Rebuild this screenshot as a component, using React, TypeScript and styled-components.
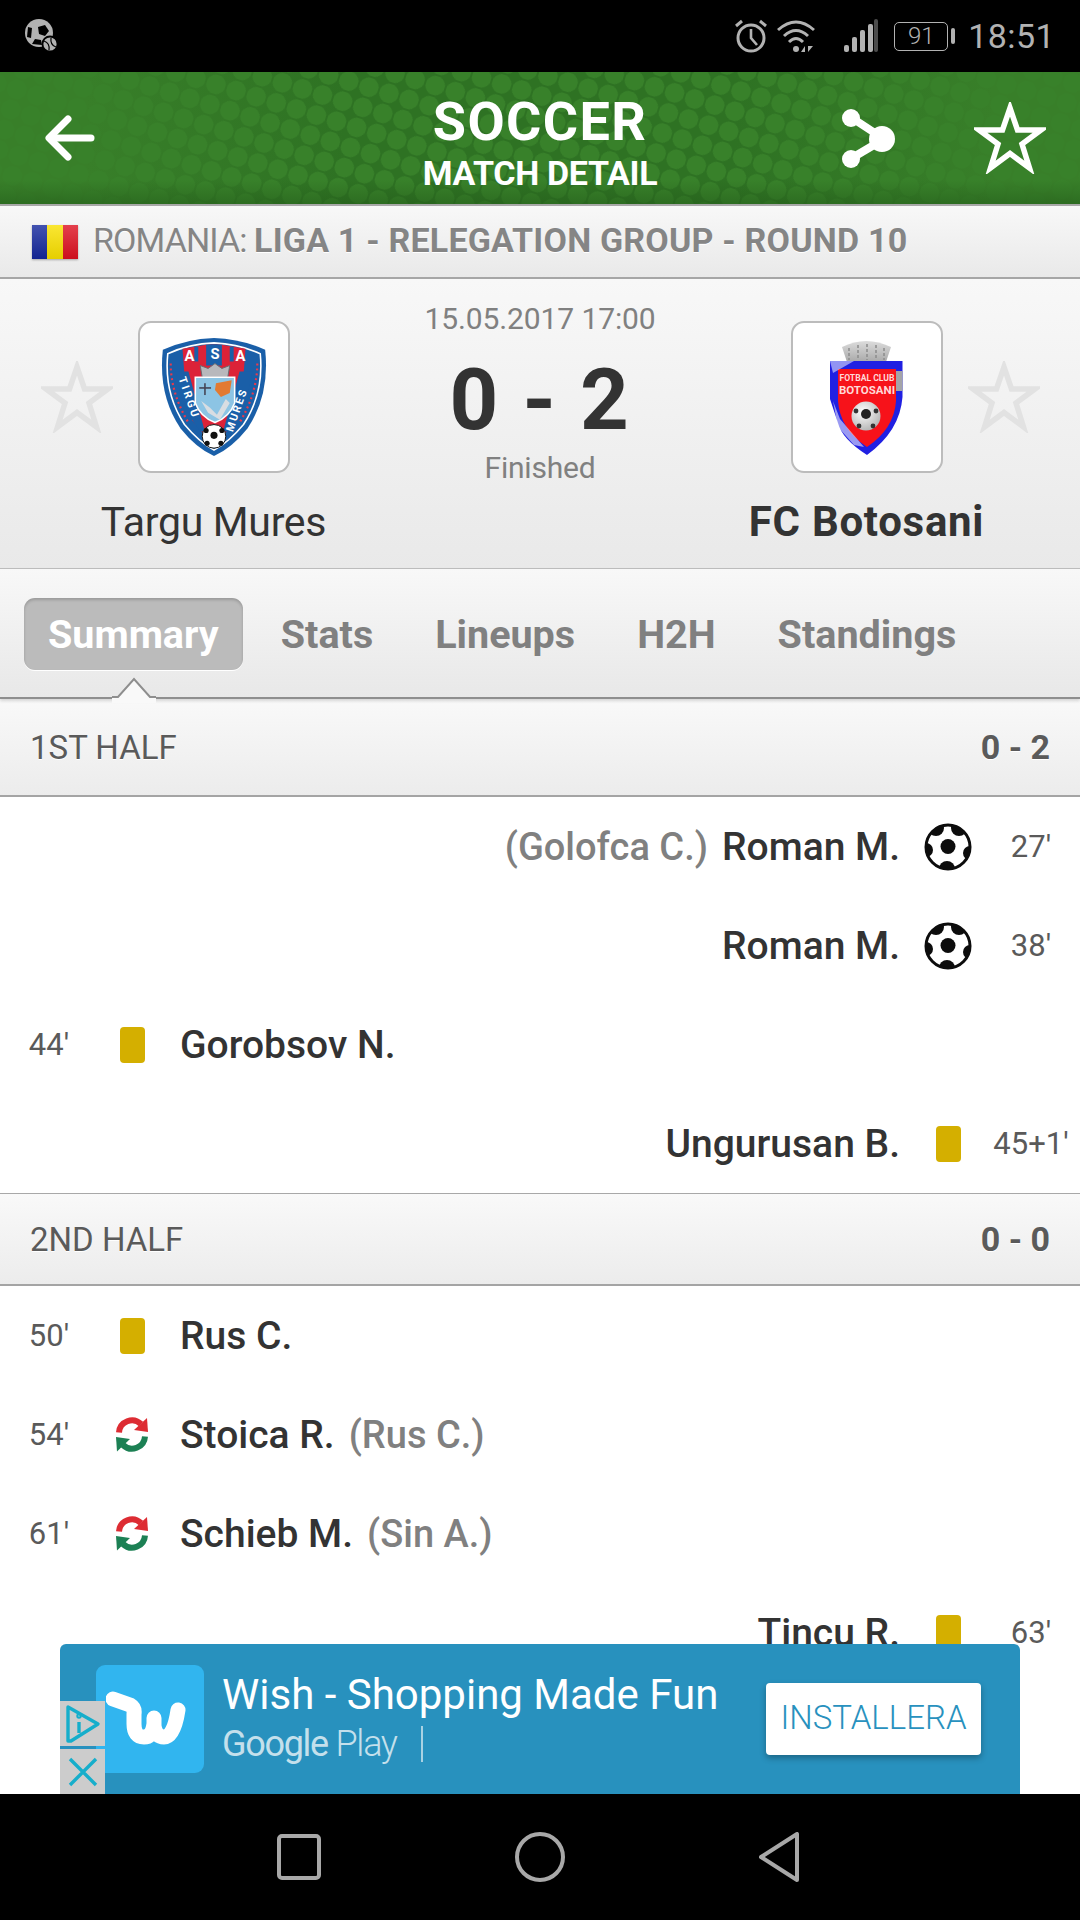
import styled, { createGlobalStyle } from 'styled-components';

const GlobalStyle = createGlobalStyle`
  html, body {
    margin: 0;
    padding: 0;
    background: #fff;
  }

  * {
    box-sizing: border-box;
  }
`;

const FONT = `Roboto, "Liberation Sans", sans-serif`;

type Side = 'left' | 'right';
type Mark = 'ball' | 'card' | 'sub';

type MatchEvent = {
  side: Side;
  minute: string;
  mark: Mark;
  name: string;
  assist?: string;
};

const FIRST_HALF: MatchEvent[] = [
  { side: 'right', minute: "27'", mark: 'ball', name: 'Roman M.', assist: '(Golofca C.)' },
  { side: 'right', minute: "38'", mark: 'ball', name: 'Roman M.' },
  { side: 'left', minute: "44'", mark: 'card', name: 'Gorobsov N.' },
  { side: 'right', minute: "45+1'", mark: 'card', name: 'Ungurusan B.' },
];

const SECOND_HALF: MatchEvent[] = [
  { side: 'left', minute: "50'", mark: 'card', name: 'Rus C.' },
  { side: 'left', minute: "54'", mark: 'sub', name: 'Stoica R.', assist: '(Rus C.)' },
  { side: 'left', minute: "61'", mark: 'sub', name: 'Schieb M.', assist: '(Sin A.)' },
  { side: 'right', minute: "63'", mark: 'card', name: 'Tincu R.' },
];

const TABS = ['Summary', 'Stats', 'Lineups', 'H2H', 'Standings'];

const StarIcon = ({ size, color }: { size: number; color: string }) => (
  <svg width={size} height={size} viewBox="0 0 72 70" fill="none">
    <path
      d="M36 5 L43.5 27 L67 27 L48 41 L55.5 65 L36 50.5 L16.5 65 L24 41 L5 27 L28.5 27 Z"
      stroke={color}
      strokeWidth="5.5"
      strokeLinejoin="miter"
    />
  </svg>
);

const BallIcon = () => (
  <svg width="48" height="48" viewBox="0 0 48 48">
    <defs>
      <clipPath id="ballClip">
        <circle cx="24" cy="24" r="22" />
      </clipPath>
    </defs>
    <circle cx="24" cy="24" r="22" fill="#fff" />
    <g clipPath="url(#ballClip)" fill="#0c0c0c">
      <circle cx="12" cy="5" r="8" />
      <circle cx="35" cy="5" r="8" />
      <circle cx="2" cy="27" r="7" />
      <circle cx="46" cy="30" r="7" />
      <circle cx="23" cy="46" r="8" />
    </g>
    <circle cx="24" cy="24" r="22" fill="none" stroke="#0c0c0c" strokeWidth="3" />
    <circle cx="24" cy="23.5" r="7.5" fill="#0c0c0c" />
  </svg>
);

const SubIcon = () => (
  <svg width="36" height="36" viewBox="0 0 36 36" fill="none">
    <path d="M5 15.5 A13 13 0 0 1 27 7" stroke="#dd2c33" strokeWidth="6" />
    <path d="M33 1 L34 15 L20 13 Z" fill="#dd2c33" />
    <path d="M31 19.5 A13 13 0 0 1 9 28" stroke="#1c8054" strokeWidth="6" />
    <path d="M3 34.5 L2 20 L16 22 Z" fill="#1c8054" />
  </svg>
);

const AsaCrest = () => (
  <svg width="112" height="122" viewBox="0 0 112 124">
    <path d="M56 2 Q84 3 108 14 Q113 60 90 94 Q74 114 56 122 Q38 114 22 94 Q-1 60 4 14 Q28 3 56 2 Z" fill="#1a5fa8" />
    <path d="M56 7 Q81 8 103 18 Q107 58 86 90 Q71 108 56 116 Q41 108 26 90 Q5 58 9 18 Q31 8 56 7 Z" fill="none" stroke="#fff" strokeWidth="1.6" />
    <path d="M24 13 L48 9 H64 L88 13 L86 40 L78 86 L56 112 L34 86 L26 40 Z" fill="#dc2238" />
    <path d="M48 9 H64 V30 H48 Z" fill="#1a5fa8" />
    <path d="M36 11 H40 V26 H36 Z M72 11 H76 V26 H72 Z" fill="#1a5fa8" />
    <path d="M12 28 Q12 58 30 88" stroke="#e83a4c" strokeWidth="2.2" fill="none" strokeDasharray="2 3" />
    <path d="M100 28 Q100 58 82 88" stroke="#e83a4c" strokeWidth="2.2" fill="none" strokeDasharray="2 3" />
    <path d="M17 36 L30 36 L47 98 L41 96 Q22 70 17 36 Z" fill="#1a5fa8" />
    <path d="M95 36 L82 36 L65 98 L71 96 Q90 70 95 36 Z" fill="#1a5fa8" />
    <text x="31" y="25" fontFamily={FONT} fontSize="15" fontWeight="700" fill="#fff" textAnchor="middle">A</text>
    <text x="57" y="23" fontFamily={FONT} fontSize="15" fontWeight="700" fill="#fff" textAnchor="middle">S</text>
    <text x="83" y="25" fontFamily={FONT} fontSize="15" fontWeight="700" fill="#fff" textAnchor="middle">A</text>
    <text transform="translate(20 43) rotate(71)" fontFamily={FONT} fontSize="11" fontWeight="700" fill="#fff" letterSpacing="2.6">TIRGU</text>
    <text transform="translate(75 98) rotate(-71)" fontFamily={FONT} fontSize="11" fontWeight="700" fill="#fff" letterSpacing="1.8">MURES</text>
    <path d="M44 42 L42 30 L50 33 L57 28 L64 33 L72 30 L70 42 Z" fill="#b8b8bc" stroke="#6a6a70" strokeWidth="1" />
    <path d="M37 42 H77 V68 Q72 82 57 88 Q42 82 37 68 Z" fill="#8cc4e4" stroke="#fff" strokeWidth="1.6" />
    <path d="M58 48 L74 45 L72 58 L63 62 L57 55 Z" fill="#e27a32" />
    <path d="M43 66 L52 73 L59 80 L68 64 L72 68 L62 85 L50 78 Z" fill="#d8dde2" />
    <rect x="41" y="52" width="12" height="1.6" fill="#445" />
    <rect x="46" y="48" width="1.6" height="12" fill="#445" />
    <circle cx="56" cy="102" r="12" fill="#fff" stroke="#111" strokeWidth="1" />
    <circle cx="56" cy="101" r="3.6" fill="#111" />
    <circle cx="48" cy="96" r="2.6" fill="#111" />
    <circle cx="64" cy="96" r="2.6" fill="#111" />
    <circle cx="49" cy="109" r="2.6" fill="#111" />
    <circle cx="63" cy="109" r="2.6" fill="#111" />
  </svg>
);

const BotosaniCrest = () => (
  <svg width="73" height="117" viewBox="0 0 73 117">
    <defs>
      <linearGradient id="crownGrey" x1="0" y1="0" x2="0" y2="1">
        <stop offset="0" stopColor="#dcdcdc" />
        <stop offset="1" stopColor="#a9a9a9" />
      </linearGradient>
      <radialGradient id="ballShade" cx="0.4" cy="0.35" r="0.8">
        <stop offset="0" stopColor="#ffffff" />
        <stop offset="1" stopColor="#a8a8a8" />
      </radialGradient>
    </defs>
    <path d="M17 23 L12 8 Q36 -4 61 8 L56 23 Z" fill="url(#crownGrey)" />
    <path d="M19 9 V21 M28 6 V21 M37 5 V21 M46 6 V21 M54 9 V21" stroke="#8f8f8f" strokeWidth="1.6" strokeDasharray="3 2" />
    <path d="M0 22 H72.5 V58 Q70 92 37 116 Q12 100 8 84 L0 60 Z" fill="#2020e2" />
    <path d="M66 32 H72.5 V52 H66 Z" fill="#a4a4a8" />
    <path d="M8 30 H66 V62 Q64 90 37 108 Q10 90 8 62 Z" fill="#f7121a" />
    <path d="M0 22 H24 L3 34 Z" fill="#dfe2ff" opacity="0.6" />
    <path d="M3 62 L10 80 L34 108 L24 106 L8 88 Z" fill="#fff" opacity="0.55" />
    <text x="37" y="42" fontFamily={FONT} fontSize="8.6" fontWeight="700" fill="#ffd8d8" textAnchor="middle">FOTBAL CLUB</text>
    <text x="37" y="55" fontFamily={FONT} fontSize="11.5" fontWeight="700" fill="#ffd8d8" textAnchor="middle">BOTOSANI</text>
    <circle cx="36" cy="77" r="14.5" fill="url(#ballShade)" />
    <circle cx="36" cy="75" r="5" fill="#222" />
    <circle cx="26" cy="72" r="2.4" fill="#333" />
    <circle cx="46" cy="72" r="2.4" fill="#333" />
    <circle cx="29" cy="87" r="2.4" fill="#333" />
    <circle cx="43" cy="87" r="2.4" fill="#333" />
  </svg>
);

const WishGlyph = () => (
  <svg width="82" height="58" viewBox="0 0 82 58" fill="none">
    <path
      d="M7 9 L24 15 Q29 18 28 24 V34 Q28 47 38 47 Q46 47 48 34 V28 V36 Q50 47 58 47 Q68 47 72 20"
      stroke="#fff"
      strokeWidth="15"
      strokeLinecap="round"
      strokeLinejoin="round"
    />
  </svg>
);

const EventMark = ({ mark }: { mark: Mark }) => {
  if (mark === 'ball') return <BallIcon />;
  if (mark === 'sub') return <SubIcon />;
  return <YellowCard />;
};

const EventRow = ({ event }: { event: MatchEvent }) => (
  <Row $side={event.side}>
    <Minute>{event.minute}</Minute>
    <MarkCell>
      <EventMark mark={event.mark} />
    </MarkCell>
    <PlayerName>{event.name}</PlayerName>
    {event.assist && <Assist>{event.assist}</Assist>}
  </Row>
);

const App = () => {
  return (
    <Page>
      <GlobalStyle />
      <StatusBar>
        <svg width="34" height="34" viewBox="0 0 34 34">
          <circle cx="15" cy="14" r="14" fill="#b2b2b2" />
          <path d="M14 8 L21 6 L25 12 L21 17 L15 15 Z" fill="#000" />
          <path d="M4 8 L8 9 L7 19 L3 18 Z" fill="#000" />
          <path d="M8 25 L11 20 L17 21 L18 26 Z" fill="#000" />
          <circle cx="26" cy="25" r="8.5" fill="#000" />
          <circle cx="26" cy="25" r="6.6" fill="#b2b2b2" />
          <path d="M20 22 Q26 24 25 31 M32 28 Q26 26 27 19" stroke="#000" strokeWidth="1.2" fill="none" />
        </svg>
        <StatusRight>
          <svg width="32" height="34" viewBox="0 0 32 34" fill="none" stroke="#b2b2b2">
            <circle cx="16" cy="19" r="13" strokeWidth="3" />
            <path d="M16 10 V19 L22 26" strokeWidth="2.6" />
            <path d="M1 7 L7 2 M31 7 L25 2" strokeWidth="3" />
          </svg>
          <WifiIcon width="38" height="34" viewBox="0 0 38 34" fill="none" stroke="#b2b2b2">
            <path d="M1 11 Q19 -5 37 11" strokeWidth="3" />
            <path d="M7 17 Q19 6 31 17" strokeWidth="3" />
            <path d="M12 23 Q19 16 26 23" strokeWidth="3" />
            <circle cx="19" cy="30" r="3" fill="#b2b2b2" stroke="none" />
            <path d="M28 33 V27 L24 33 Z M31 27 V33 L36 27 Z" fill="#b2b2b2" stroke="none" />
          </WifiIcon>
          <SignalIcon width="35" height="34" viewBox="0 0 35 34">
            <rect x="0" y="26" width="5" height="7" rx="2" fill="#b2b2b2" />
            <rect x="8" y="18" width="5" height="15" rx="2" fill="#b2b2b2" />
            <rect x="16" y="11" width="5" height="22" rx="2" fill="#b2b2b2" />
            <rect x="24" y="5" width="5" height="28" rx="2" fill="#b2b2b2" />
            <rect x="30" y="0" width="4" height="33" rx="2" fill="#4c4c4c" />
          </SignalIcon>
          <Battery>
            <BatteryBody>91</BatteryBody>
            <BatteryNub />
          </Battery>
          <Clock>18:51</Clock>
        </StatusRight>
      </StatusBar>

      <Header>
        <HeaderSide>
          <svg width="52" height="48" viewBox="0 0 52 48" fill="none" stroke="#fff" strokeWidth="7" strokeLinecap="round" strokeLinejoin="round">
            <path d="M24 5 L5 24 L24 43" />
            <path d="M7 24 H47" />
          </svg>
        </HeaderSide>
        <HeaderTitle>
          <Sport>SOCCER</Sport>
          <Screen>MATCH DETAIL</Screen>
        </HeaderTitle>
        <HeaderActions>
          <svg width="54" height="60" viewBox="0 0 54 60">
            <path d="M10 10 L42 31 L10 50" stroke="#fff" strokeWidth="8" fill="none" />
            <circle cx="9" cy="10" r="9" fill="#fff" />
            <circle cx="40" cy="31" r="13" fill="#fff" />
            <circle cx="9" cy="51" r="9" fill="#fff" />
          </svg>
          <StarIcon size={72} color="#fff" />
        </HeaderActions>
      </Header>

      <LeagueBar>
        <Flag />
        <LeagueText>
          ROMANIA: <b>LIGA 1 - RELEGATION GROUP - ROUND 10</b>
        </LeagueText>
      </LeagueBar>

      <MatchBlock>
        <Team>
          <LogoRow>
            <FavouriteStar $side="left">
              <StarIcon size={72} color="#e2e2e2" />
            </FavouriteStar>
            <LogoBox>
              <AsaCrest />
            </LogoBox>
          </LogoRow>
          <TeamName>Targu Mures</TeamName>
        </Team>
        <ScoreColumn>
          <MatchDate>15.05.2017 17:00</MatchDate>
          <Score>0 - 2</Score>
          <MatchState>Finished</MatchState>
        </ScoreColumn>
        <Team>
          <LogoRow>
            <LogoBox>
              <BotosaniCrest />
            </LogoBox>
            <FavouriteStar $side="right">
              <StarIcon size={72} color="#e2e2e2" />
            </FavouriteStar>
          </LogoRow>
          <TeamName $winner>FC Botosani</TeamName>
        </Team>
      </MatchBlock>

      <TabBar>
        {TABS.map((tab, idx) => (
          <Tab key={tab} $active={idx === 0}>
            {tab}
          </Tab>
        ))}
        <TabNotch width="44" height="26" viewBox="0 0 44 26">
          <path d="M0 20 L6 20 L22 2 L38 20 L44 20 V26 H0 Z" fill="#f9f9f9" />
          <path d="M0 20 H6 L22 2 L38 20 H44" fill="none" stroke="#8e8e8e" strokeWidth="2" />
        </TabNotch>
      </TabBar>

      <Content>
        <HalfHeader $height={98}>
          <HalfName>1ST HALF</HalfName>
          <HalfScore>0 - 2</HalfScore>
        </HalfHeader>
        {FIRST_HALF.map((event, idx) => (
          <EventRow key={idx} event={event} />
        ))}
        <HalfHeader $height={93} $ruled>
          <HalfName>2ND HALF</HalfName>
          <HalfScore>0 - 0</HalfScore>
        </HalfHeader>
        {SECOND_HALF.map((event, idx) => (
          <EventRow key={idx} event={event} />
        ))}

        <AdBanner>
          <AdIcon>
            <WishGlyph />
          </AdIcon>
          <AdCopy>
            <AdTitle>Wish - Shopping Made Fun</AdTitle>
            <AdStore>
              <span>
                Google <em>Play</em>
              </span>
              <AdDivider />
            </AdStore>
          </AdCopy>
          <InstallButton>INSTALLERA</InstallButton>
          <AdBadges>
            <AdBadge>
              <svg width="36" height="38" viewBox="0 0 36 38" fill="none" stroke="#16aecb" strokeWidth="3.4" strokeLinejoin="round">
                <path d="M3 2 L33 19 L6 36 H3 Z" />
                <path d="M14 17 V28" />
                <circle cx="14" cy="11" r="1" />
              </svg>
            </AdBadge>
            <AdBadge>
              <svg width="30" height="30" viewBox="0 0 30 30" stroke="#16aecb" strokeWidth="3.4">
                <path d="M2 2 L28 28 M28 2 L2 28" />
              </svg>
            </AdBadge>
          </AdBadges>
        </AdBanner>
      </Content>

      <NavBar>
        <svg width="44" height="46" viewBox="0 0 44 46" fill="none" stroke="#a8a8a8" strokeWidth="4">
          <rect x="2" y="2" width="40" height="42" rx="3" />
        </svg>
        <svg width="50" height="50" viewBox="0 0 50 50" fill="none" stroke="#a8a8a8" strokeWidth="4">
          <circle cx="25" cy="25" r="23" />
        </svg>
        <svg width="40" height="50" viewBox="0 0 40 50" fill="none" stroke="#a8a8a8" strokeWidth="4" strokeLinejoin="round">
          <path d="M38 2 V48 L2 25 Z" />
        </svg>
      </NavBar>
    </Page>
  );
};

const Page = styled.div`
  width: 1080px;
  height: 1920px;
  display: flex;
  flex-direction: column;
  overflow: hidden;
  background: #fff;
  font-family: ${FONT};
`;

const StatusBar = styled.div`
  height: 72px;
  flex: none;
  display: flex;
  align-items: center;
  justify-content: space-between;
  padding: 0 25px 0 24px;
  background: #000;
`;

const StatusRight = styled.div`
  display: flex;
  align-items: center;
`;

const WifiIcon = styled.svg`
  margin-left: 10px;
`;

const SignalIcon = styled.svg`
  margin-left: 29px;
`;

const Battery = styled.div`
  display: flex;
  align-items: center;
  margin-left: 15px;
`;

const BatteryBody = styled.div`
  width: 54px;
  height: 29px;
  display: flex;
  align-items: center;
  justify-content: center;
  border: 1.5px solid #b2b2b2;
  border-radius: 5px;
  color: #b2b2b2;
  font-size: 24px;
  font-weight: 300;
`;

const BatteryNub = styled.div`
  width: 4px;
  height: 16px;
  margin-left: 3px;
  border-radius: 2px;
  background: #b2b2b2;
`;

const Clock = styled.div`
  margin-left: 13px;
  color: #b2b2b2;
  font-size: 34px;
  font-weight: 400;
  letter-spacing: 0.4px;
`;

const Header = styled.div`
  position: relative;
  height: 134px;
  flex: none;
  display: grid;
  grid-template-columns: 1fr auto 1fr;
  align-items: center;
  padding: 0 34px;
  overflow: hidden;
  border-bottom: 2px solid #a8a8a8;
  background: linear-gradient(90deg, #387f29 0%, #387f29 8%, #2e7223 32%, #2e7223 68%, #387f29 92%, #387f29 100%);

  /* dotted texture, tilted as in the app's header artwork */
  &::before {
    content: '';
    position: absolute;
    inset: -300px;
    transform: rotate(17deg);
    background: radial-gradient(circle at 50% 50%, #38812a 0 9.4px, transparent 10px) 0 0 / 21px 21px;
  }

  &::after {
    content: '';
    position: absolute;
    left: 0;
    right: 0;
    bottom: 0;
    height: 24px;
    background: linear-gradient(180deg, rgba(36, 92, 26, 0), rgba(36, 92, 26, 0.55));
  }

  & > * {
    position: relative;
    z-index: 1;
  }
`;

const HeaderSide = styled.div`
  display: flex;
  align-items: center;
  margin-left: 10px;
`;

const HeaderTitle = styled.div`
  display: flex;
  flex-direction: column;
  align-items: center;
  padding-top: 9px;
  color: #fff;
`;

const Sport = styled.div`
  font-size: 54px;
  line-height: 58px;
  font-weight: 700;
  letter-spacing: 1.4px;
`;

const Screen = styled.div`
  margin-top: 3px;
  font-size: 34px;
  line-height: 38px;
  font-weight: 700;
  letter-spacing: -0.3px;
`;

const HeaderActions = styled.div`
  display: flex;
  align-items: center;
  justify-content: flex-end;
  gap: 78px;
`;

const LeagueBar = styled.div`
  height: 73px;
  flex: none;
  display: flex;
  align-items: center;
  gap: 15px;
  padding-left: 32px;
  border-bottom: 2px solid #a6a6a6;
  background: linear-gradient(180deg, #f8f8f8, #e9e9e9);
`;

const Flag = styled.div`
  width: 46px;
  height: 34px;
  box-shadow: 0 1px 2px rgba(0, 0, 0, 0.3);
  background:
    linear-gradient(180deg, rgba(255, 255, 255, 0.2), rgba(0, 0, 0, 0.08)),
    linear-gradient(90deg, #14279c 0 33.3%, #f9e000 33.3% 66.6%, #dd1020 66.6%);
`;

const LeagueText = styled.div`
  padding-bottom: 3px;
  color: #858585;
  font-size: 34px;
  font-weight: 400;
  letter-spacing: -0.9px;
  text-shadow: 0 1px 0 #fff;

  b {
    font-weight: 700;
    letter-spacing: 0.2px;
  }
`;

const MatchBlock = styled.div`
  height: 289px;
  flex: none;
  display: grid;
  grid-template-columns: 427px 226px 427px;
  background: linear-gradient(180deg, #f8f8f8, #e9e9e9);
`;

const Team = styled.div`
  display: flex;
  flex-direction: column;
  align-items: center;
  padding-top: 42px;
`;

const LogoRow = styled.div`
  width: 100%;
  display: grid;
  grid-template-columns: 1fr 152px 1fr;
  column-gap: 25px;
  align-items: center;
`;

const FavouriteStar = styled.div<{ $side: Side }>`
  display: flex;
  grid-column: ${(p) => (p.$side === 'left' ? 1 : 3)};
  grid-row: 1;
  justify-self: ${(p) => (p.$side === 'left' ? 'end' : 'start')};
`;

const LogoBox = styled.div`
  grid-column: 2;
  grid-row: 1;
  height: 152px;
  display: flex;
  align-items: center;
  justify-content: center;
  border: 2px solid #bcbcbc;
  border-radius: 13px;
  background: #fff;
`;

const TeamName = styled.div<{ $winner?: boolean }>`
  margin-top: 24px;
  color: #333;
  font-size: ${(p) => (p.$winner ? 42 : 41)}px;
  line-height: 50px;
  font-weight: ${(p) => (p.$winner ? 700 : 400)};
  letter-spacing: ${(p) => (p.$winner ? 0.7 : -0.3)}px;
`;

const ScoreColumn = styled.div`
  display: flex;
  flex-direction: column;
  align-items: center;
  padding-top: 21px;
`;

const MatchDate = styled.div`
  color: #808080;
  font-size: 30px;
  line-height: 38px;
  font-weight: 400;
  letter-spacing: -0.1px;
  white-space: nowrap;
`;

const Score = styled.div`
  margin-top: 17px;
  color: #333;
  font-size: 85px;
  line-height: 90px;
  font-weight: 700;
  letter-spacing: 1.5px;
  white-space: pre;
`;

const MatchState = styled.div`
  margin-top: 4px;
  color: #808080;
  font-size: 30px;
  line-height: 38px;
  font-weight: 400;
  letter-spacing: -0.2px;
`;

const TabBar = styled.div`
  position: relative;
  z-index: 1;
  height: 131px;
  flex: none;
  display: flex;
  align-items: flex-start;
  gap: 14px;
  padding: 29px 0 0 24px;
  border-top: 1px solid #bcbcbc;
  border-bottom: 2px solid #8e8e8e;
  background: linear-gradient(180deg, #f8f8f8, #e8e8e8);
  box-shadow: 0 2px 3px rgba(0, 0, 0, 0.14);
`;

const Tab = styled.div<{ $active?: boolean }>`
  height: 72px;
  display: flex;
  align-items: center;
  padding: 0 24px;
  border-radius: 11px;
  color: ${(p) => (p.$active ? '#fff' : '#808080')};
  background: ${(p) => (p.$active ? '#bbb' : 'transparent')};
  box-shadow: ${(p) => (p.$active ? 'inset 0 2px 3px rgba(0, 0, 0, 0.18), 0 1px 0 #fff' : 'none')};
  font-size: 39.5px;
  font-weight: 700;
`;

const TabNotch = styled.svg`
  position: absolute;
  left: 112px;
  bottom: -6px;
`;

const Content = styled.div`
  position: relative;
  flex: 1;
  overflow: hidden;
  background: #fff;
`;

const HalfHeader = styled.div<{ $height: number; $ruled?: boolean }>`
  height: ${(p) => p.$height}px;
  display: flex;
  align-items: center;
  justify-content: space-between;
  padding: 0 30px;
  border-top: ${(p) => (p.$ruled ? '1px solid #a8a8a8' : 'none')};
  border-bottom: 2px solid #a4a4a4;
  background: linear-gradient(180deg, #f9f9f9, #ececec);
  color: #5a5a5a;
  font-size: 33px;
`;

const HalfName = styled.div`
  font-weight: 400;
  text-shadow: 0 1px 0 #fff;
`;

const HalfScore = styled.div`
  font-size: 34px;
  font-weight: 700;
  text-shadow: 0 1px 0 #fff;
`;

const Row = styled.div<{ $side: Side }>`
  height: 99px;
  display: flex;
  flex-direction: ${(p) => (p.$side === 'left' ? 'row' : 'row-reverse')};
  align-items: center;
`;

const Minute = styled.div`
  width: 98px;
  flex: none;
  text-align: center;
  color: #5a5a5a;
  font-size: 31px;
  font-weight: 400;
`;

const MarkCell = styled.div`
  width: 68px;
  flex: none;
  display: flex;
  align-items: center;
  justify-content: center;
`;

const YellowCard = styled.div`
  width: 25px;
  height: 36px;
  border-radius: 4px;
  background: #d4af00;
`;

const PlayerName = styled.div`
  margin: 0 14px;
  color: #333;
  font-size: 39px;
  font-weight: 500;
`;

const Assist = styled.div`
  color: #808080;
  font-size: 38px;
  font-weight: 500;
`;

const AdBanner = styled.div`
  position: absolute;
  left: 60px;
  bottom: 0;
  width: 960px;
  height: 150px;
  display: flex;
  align-items: center;
  padding: 0 39px 0 36px;
  border-radius: 6px 6px 0 0;
  background: #2891be;
`;

const AdIcon = styled.div`
  width: 108px;
  height: 108px;
  flex: none;
  display: flex;
  align-items: center;
  justify-content: center;
  padding-right: 6px;
  border-radius: 9px;
  background: #31b5ef;
`;

const AdCopy = styled.div`
  flex: 1;
  margin-left: 18px;
  display: flex;
  flex-direction: column;
  color: #fff;
`;

const AdTitle = styled.div`
  margin-top: -3px;
  margin-bottom: 3px;
  font-size: 42px;
  line-height: 50px;
  font-weight: 400;
  white-space: nowrap;
`;

const AdStore = styled.div`
  display: flex;
  align-items: center;
  gap: 24px;
  color: #c4e0ec;
  font-size: 36px;
  line-height: 42px;
  font-weight: 400;
  letter-spacing: -1.3px;

  em {
    font-style: normal;
    font-weight: 300;
  }
`;

const AdDivider = styled.div`
  width: 2px;
  height: 36px;
  background: #a9d2e3;
`;

const InstallButton = styled.div`
  width: 215px;
  height: 72px;
  flex: none;
  display: flex;
  align-items: center;
  justify-content: center;
  padding-bottom: 3px;
  border-radius: 4px;
  background: #fff;
  box-shadow: 0 3px 6px rgba(0, 0, 0, 0.3);
  color: #2891be;
  font-size: 33px;
  font-weight: 300;
`;

const AdBadges = styled.div`
  position: absolute;
  left: 0;
  bottom: 0;
  display: flex;
  flex-direction: column;
  gap: 3px;
`;

const AdBadge = styled.div`
  width: 45px;
  height: 45px;
  display: flex;
  align-items: center;
  justify-content: center;
  background: #cccccc;
`;

const NavBar = styled.div`
  height: 126px;
  flex: none;
  display: flex;
  align-items: center;
  justify-content: center;
  gap: 194px;
  padding-right: 5px;
  background: #000;
`;

export default App;
